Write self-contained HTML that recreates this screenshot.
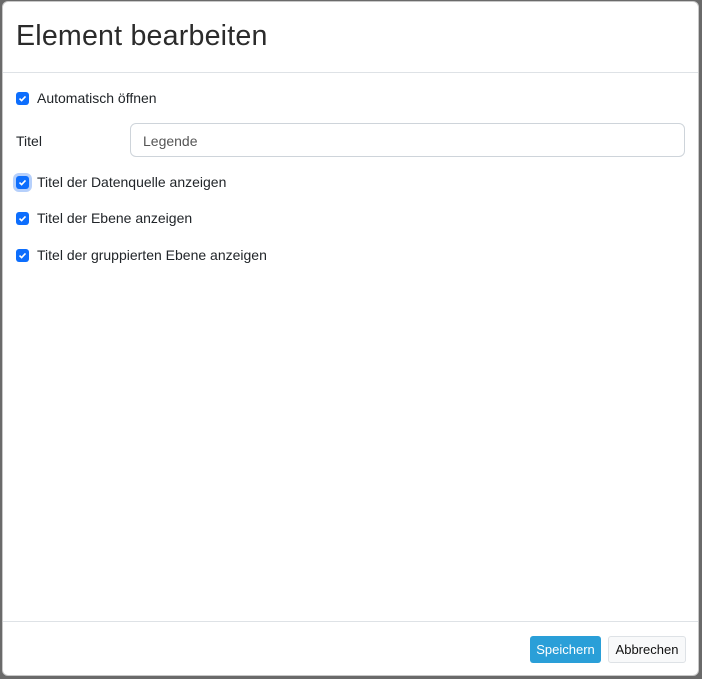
<!DOCTYPE html>
<html><head><meta charset="utf-8"><style>
html,body{margin:0;padding:0;width:702px;height:679px;background:#6a6a6a;overflow:hidden;font-family:"Liberation Sans","DejaVu Sans",sans-serif;color:#212529}
.modal{position:absolute;left:2px;top:1px;width:697px;height:675px;background:#fff;border-radius:6px;border:1px solid #c8c8c8;box-sizing:border-box}
.hdr{height:71px;border-bottom:1px solid #dee2e6;box-sizing:border-box}
.hdr h1{margin:0;position:absolute;left:13px;top:18px;font-size:28.6px;font-weight:normal;color:#2b2b2b;letter-spacing:0.2px}
.row{position:absolute;left:13px;font-size:14px;display:flex;align-items:center}
.cb{width:13px;height:13px;background:#0d6efd;border-radius:3px;margin-right:8px;display:flex;align-items:center;justify-content:center}
.cb.f{box-shadow:0 0 0 3px #b6d0fb}
.inp{position:absolute;top:121px;width:555px;height:34px;border:1px solid #ced4da;border-radius:6px;box-sizing:border-box;font-size:14px;color:#555;padding:9px 12px}
.ftr{position:absolute;left:0;right:0;top:619px;border-top:1px solid #dee2e6}
.btn{position:absolute;top:634px;height:27px;font-size:13px;border-radius:3px;box-sizing:border-box;display:flex;align-items:center;justify-content:center}
</style></head><body>
<div class="modal">
<div class="hdr"><h1>Element bearbeiten</h1></div>
<div class="row" style="top:88px"><span class="cb"><svg width="9" height="9" viewBox="0 0 9 9"><path d="M1.5 4.6L3.6 6.6 7.5 2.4" stroke="#fff" stroke-width="1.6" fill="none"/></svg></span>Automatisch öffnen</div>
<div class="row" style="top:131px">Titel</div>
<div class="inp" style="left:127px">Legende</div>
<div class="row" style="top:172px"><span class="cb f"><svg width="9" height="9" viewBox="0 0 9 9"><path d="M1.5 4.6L3.6 6.6 7.5 2.4" stroke="#fff" stroke-width="1.6" fill="none"/></svg></span>Titel der Datenquelle anzeigen</div>
<div class="row" style="top:208px"><span class="cb"><svg width="9" height="9" viewBox="0 0 9 9"><path d="M1.5 4.6L3.6 6.6 7.5 2.4" stroke="#fff" stroke-width="1.6" fill="none"/></svg></span>Titel der Ebene anzeigen</div>
<div class="row" style="top:245px"><span class="cb"><svg width="9" height="9" viewBox="0 0 9 9"><path d="M1.5 4.6L3.6 6.6 7.5 2.4" stroke="#fff" stroke-width="1.6" fill="none"/></svg></span>Titel der gruppierten Ebene anzeigen</div>
<div class="ftr"></div>
<div class="btn" style="left:527px;width:71px;background:#2a9fd8;color:#fff">Speichern</div>
<div class="btn" style="left:605px;width:78px;background:#f8f9fa;border:1px solid #dee2e6;color:#111">Abbrechen</div>
</div>
</body></html>
